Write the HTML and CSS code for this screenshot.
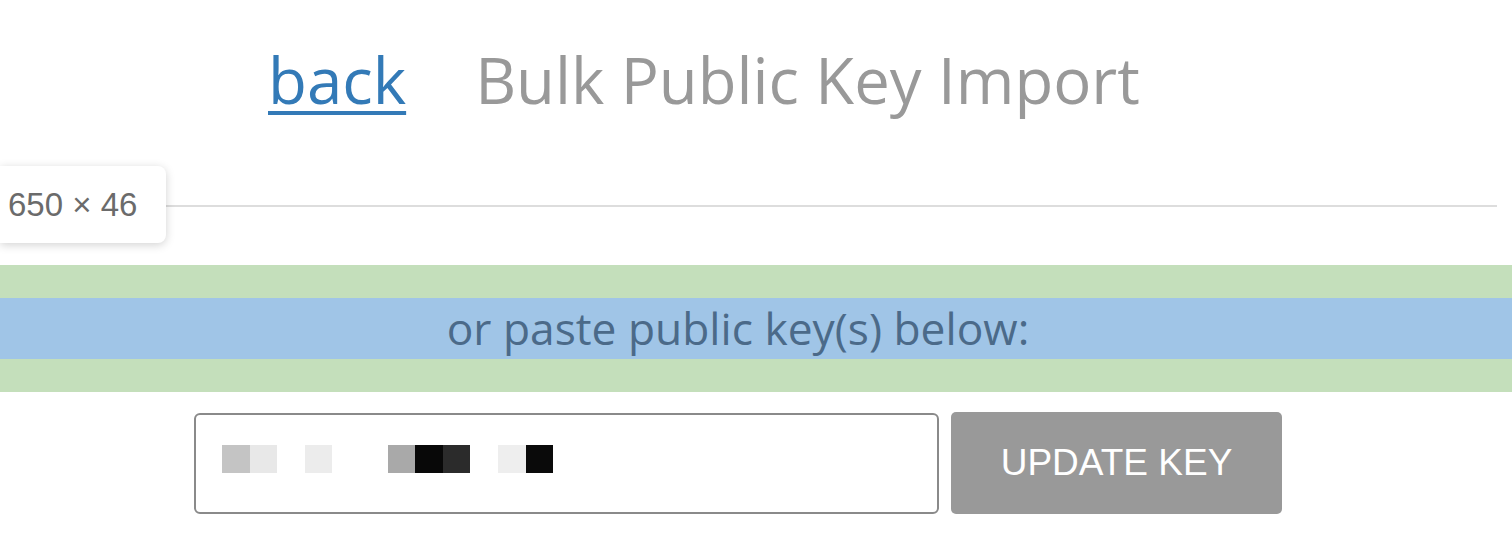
FILE: index.html
```html
<!DOCTYPE html>
<html lang="en">
<head>
<meta charset="utf-8">
<title>Bulk Public Key Import</title>
<link rel="stylesheet" href="styles.css">
</head>
<body>
<div class="page">
  <header class="header">
    <a class="back" href="#">back</a>
    <h1 class="title">Bulk Public Key Import</h1>
  </header>
  <hr class="rule">
  <div class="tooltip">650 × 46</div>
  <div class="paste-margin">
    <p class="paste-label">or paste public key(s) below:</p>
  </div>
  <form class="key-form" onsubmit="return false">
    <div class="key-input">
      <span class="px p1"></span><span class="px p2"></span><span class="px"></span><span class="px p3"></span><span class="px"></span><span class="px"></span><span class="px p4"></span><span class="px p5"></span><span class="px p6"></span><span class="px"></span><span class="px p7"></span><span class="px p8"></span>
    </div>
    <button class="update-btn" type="submit">UPDATE KEY</button>
  </form>
</div>
</body>
</html>
```
FILE: styles.css
```css
html, body {
  margin: 0;
  padding: 0;
  background: #ffffff;
}
.page {
  position: relative;
  width: 1512px;
  height: 546px;
  overflow: hidden;
}
.header {
  display: flex;
  align-items: baseline;
  gap: 69px;
  padding: 44px 0 0 268px;
  font-family: "Open Sans", "DejaVu Sans", sans-serif;
  font-size: 63.6px;
  line-height: 72px;
}
.back {
  color: #337ab7;
  text-decoration: underline;
  text-decoration-thickness: 4px;
  text-underline-offset: 7px;
}
.title {
  margin: 0;
  font-size: 63.4px;
  font-weight: 400;
  color: #999999;
}
.rule {
  border: 0;
  height: 2px;
  background: #dddddd;
  margin: 89px 15px 0 15px;
}
.tooltip {
  position: absolute;
  left: 0;
  top: 166px;
  width: 166px;
  height: 77px;
  box-sizing: border-box;
  padding-left: 8px;
  display: flex;
  align-items: center;
  background: #ffffff;
  border-radius: 0 8px 8px 0;
  box-shadow: 0 2px 10px rgba(0, 0, 0, 0.18);
  font-family: "Liberation Sans", Arial, sans-serif;
  font-size: 33px;
  color: #6b6b6b;
}
.paste-margin {
  margin-top: 58px;
  padding: 33px 0;
  background: #c4dfbb;
}
.paste-label {
  margin: 0;
  height: 61px;
  line-height: 61px;
  padding-right: 36px;
  background: #a0c5e7;
  text-align: center;
  font-family: "Open Sans", "DejaVu Sans", sans-serif;
  font-size: 44.3px;
  color: #4b6a89;
}
.key-form {
  display: flex;
  justify-content: center;
  gap: 12px;
  margin-top: 21px;
  padding-right: 36px;
}
.key-input {
  box-sizing: border-box;
  width: 745px;
  height: 101px;
  border: 2px solid #8a8a8a;
  border-radius: 6px;
  padding: 30px 0 0 26px;
  display: flex;
  align-items: flex-start;
}
.px {
  width: 27.6px;
  height: 27.5px;
  flex: none;
  background: #ffffff;
}
.p1 { background: #c4c4c4; }
.p2 { background: #e8e8e8; }
.p3 { background: #ececec; }
.p4 { background: #a9a9a9; }
.p5 { background: #080808; }
.p6 { background: #2b2b2b; }
.p7 { background: #eeeeee; }
.p8 { background: #0a0a0a; }
.update-btn {
  width: 331px;
  height: 102px;
  margin-top: -1px;
  border: 0;
  border-radius: 5px;
  background: #999999;
  color: #ffffff;
  font-family: "Liberation Sans", Arial, sans-serif;
  font-size: 37px;
  padding: 0;
}
```
